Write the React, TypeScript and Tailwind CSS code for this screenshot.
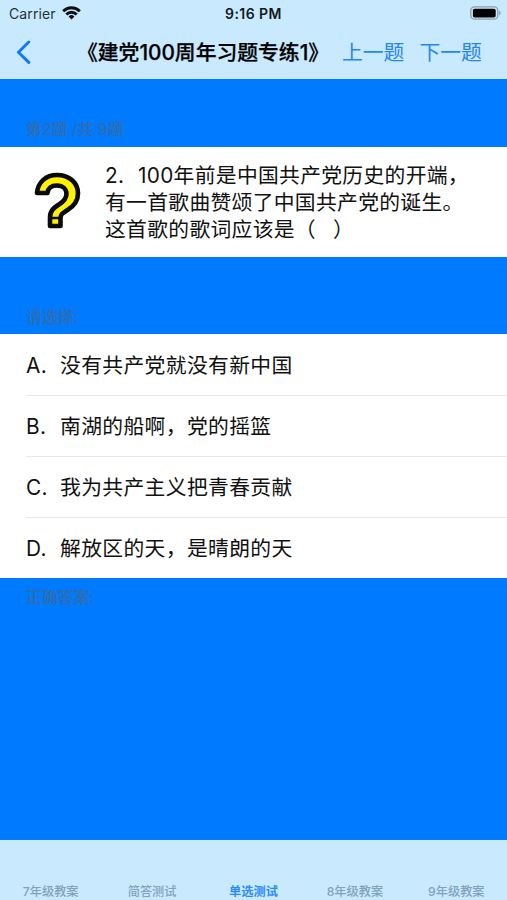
const options = [
  { key: "A", text: "没有共产党就没有新中国" },
  { key: "B", text: "南湖的船啊，党的摇篮" },
  { key: "C", text: "我为共产主义把青春贡献" },
  { key: "D", text: "解放区的天，是晴朗的天" },
];

const tabs = ["7年级教案", "简答测试", "单选测试", "8年级教案", "9年级教案"];

function StatusBar() {
  return (
    <div className="grid grid-cols-3 items-center h-[27px] pl-[9px] pr-[5px] text-[14px] leading-[27px]">
      <div className="flex items-center gap-[6px] text-[#26323a]">
        <span className="text-[14px] tracking-[0.1px]">Carrier</span>
        <svg className="-mt-[2px]" width="19" height="14" viewBox="0 0 19 14" fill="none" stroke="#0b1014" strokeWidth="3">
          <path d="M1.2 5.2a11.8 11.8 0 0 1 16.6 0" />
          <path d="M4.3 8.5a7.4 7.4 0 0 1 10.4 0" />
          <path d="M9.5 13.4 6.6 10.4a4.1 4.1 0 0 1 5.8 0Z" fill="#0b1014" stroke="none" />
        </svg>
      </div>
      <span className="text-center font-semibold text-[#111a20] whitespace-nowrap tracking-[0.45px] pr-[4px]">9:16 PM</span>
      <svg className="justify-self-end -mt-[2px]" width="32" height="14" viewBox="0 0 32 14">
        <rect x="0.8" y="0.8" width="27" height="12.4" rx="3.6" fill="none" stroke="#8ba0ab" strokeWidth="1.3" />
        <rect x="2.9" y="2.7" width="22.8" height="8.8" rx="1.8" fill="#000" />
        <path d="M29.2 4.6c2 .8 2 4 0 4.8Z" fill="#8ba0ab" />
      </svg>
    </div>
  );
}

function NavBar() {
  return (
    <div className="flex items-center h-[52px] pl-[16px] text-[20.8px] leading-[52px] whitespace-nowrap">
      <svg className="-mt-[3px]" width="16" height="24" viewBox="0 0 16 24" fill="none" stroke="#0a7aff" strokeWidth="2.9" strokeLinecap="round" strokeLinejoin="round">
        <path d="M12.8 2 2.4 12.2l10.4 10.2" />
      </svg>
      <h1 className="ml-[45px] w-[258px] font-medium text-black [-webkit-text-stroke:0.25px_black]">《建党100周年习题专练1》</h1>
      <button className="ml-[7px] text-[#2487f5]">上一题</button>
      <button className="ml-[15px] text-[#2487f5]">下一题</button>
    </div>
  );
}

function QuestionMark() {
  return (
    <svg width="50" height="60" viewBox="0 0 50 60" fill="none">
      <path
        d="M4 21C5 10 13 3 24 3c12.500 0 21 8 21 18.500 0 8-4 12.500-10.500 16.500-5.500 3.500-7 4.500-7 8.500V54H17V46c0-7.500 3.500-10 9-13.500 5-3.200 7.500-6 7.500-10.500 0-5-3.800-8.500-9.500-8.500-6 0-9 3-9.500 7.500H4Z"
        fill="#fff200"
        stroke="#0a0a0a"
        strokeWidth="4.6"
        strokeLinejoin="round"
      />
      <path d="M17 46h10.5" stroke="#0a0a0a" strokeWidth="2.5" />
    </svg>
  );
}

function SectionLabel({ className, children }: { className: string; children: string }) {
  return (
    <p className={`shrink-0 pl-[26px] text-[15.9px] leading-[24px] font-medium text-[#336ca8] ${className}`}>
      {children}
    </p>
  );
}

export default function App() {
  return (
    <div className="flex flex-col w-[507px] h-[900px] overflow-hidden bg-[#007aff] font-[Inter,'Noto_Sans_CJK_SC',sans-serif] text-[#111]">
      <header className="h-[79px] shrink-0 bg-[#c9e9ff]">
        <StatusBar />
        <NavBar />
      </header>

      <SectionLabel className="h-[68px] pt-[39px]">第2题 /共 9题</SectionLabel>

      <section className="flex h-[110px] shrink-0 bg-white">
        <div className="w-[105px] shrink-0 pl-[33px] pt-[25px]">
          <QuestionMark />
        </div>
        <div className="pt-[15px] text-[20.8px] leading-[27px] tracking-[0.3px] whitespace-nowrap">
          <p><span className="inline-block w-[33px]">2.</span>100年前是中国共产党历史的开端，</p>
          <p>有一首歌曲赞颂了中国共产党的诞生。</p>
          <p>这首歌的歌词应该是（<span className="inline-block w-[17px]" />）</p>
        </div>
      </section>

      <SectionLabel className="h-[77px] pt-[49px]">请选择:</SectionLabel>

      <ul className="shrink-0 bg-white pl-[26px] text-[20.8px] tracking-[0.35px]">
        {options.map((o) => (
          <li key={o.key} className="flex items-center h-[61px] pt-[2px] border-t border-[#e9e9eb] first:border-transparent">
            <span className="w-[34px]">{o.key}.</span>
            <span>{o.text}</span>
          </li>
        ))}
      </ul>

      <SectionLabel className="pt-[8px]">正确答案:</SectionLabel>

      <nav className="mt-auto grid grid-cols-5 h-[60px] shrink-0 bg-[#c9e9ff] text-center text-[12.2px] leading-[18px] text-[#7fa3b7]">
        {tabs.map((t, i) => (
          <button key={t} className={`self-end -mb-px ${i === 2 ? "font-bold text-[#2b8cfa]" : "font-medium"}`}>
            {t}
          </button>
        ))}
      </nav>
    </div>
  );
}
